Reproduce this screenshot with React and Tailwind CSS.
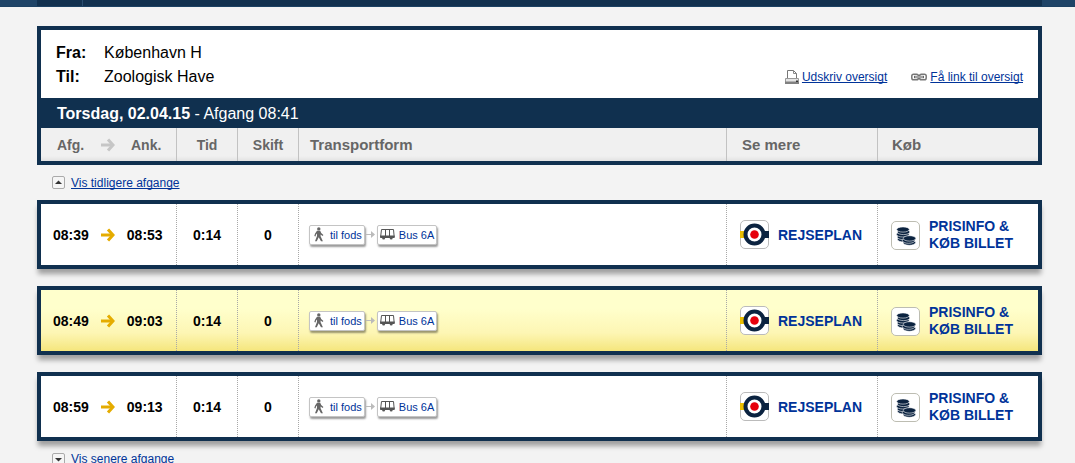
import React from "react";

const departures = [
  { dep: "08:39", arr: "08:53", duration: "0:14", changes: 0, highlighted: false },
  { dep: "08:49", arr: "09:03", duration: "0:14", changes: 0, highlighted: true },
  { dep: "08:59", arr: "09:13", duration: "0:14", changes: 0, highlighted: false },
];

const columns = "grid grid-cols-[136px_61px_61px_minmax(0,1fr)_151px_160px]";
const smallLink =
  "text-xs leading-4 text-[#003399] underline underline-offset-1 [text-decoration-skip-ink:none]";

function Arrow({ className }) {
  return (
    <svg className={className} width="14" height="14" viewBox="0 0 14 14" fill="none" stroke="currentColor" aria-hidden="true">
      <path d="M0 7H12" strokeWidth="3" />
      <path d="M7 1.4L12 7L7 12.6" strokeWidth="3" />
    </svg>
  );
}

function PrinterIcon() {
  return (
    <svg width="14" height="14" viewBox="0 0 14 14" aria-hidden="true">
      <path d="M2.5 9V.5H8.5L11.5 3.5V9" fill="#fff" stroke="#777" />
      <path d="M8.5 .5V3.5H11.5" fill="none" stroke="#888" />
      <path d="M.5 8.5H13.5V13.5H.5Z" fill="#e4e4e4" stroke="#999" />
      <path d="M0 11.5H14V14H0Z" fill="#808080" />
      <path d="M11 10.5H13V12H11Z" fill="#333" />
    </svg>
  );
}

function LinkIcon() {
  return (
    <svg width="16" height="8" viewBox="0 0 16 8" fill="none" aria-hidden="true">
      <rect x=".8" y="1.2" width="6.6" height="5.6" rx="1.8" stroke="#777" strokeWidth="1.5" />
      <rect x="8.6" y="1.2" width="6.6" height="5.6" rx="1.8" stroke="#777" strokeWidth="1.5" />
      <path d="M3 4H13" stroke="#666" strokeWidth="2.4" />
      <path d="M4 4H12" stroke="#eee" strokeWidth=".9" />
    </svg>
  );
}

function WalkIcon() {
  return (
    <svg width="10" height="15" viewBox="0 0 10 15" aria-hidden="true">
      <circle cx="4.8" cy="1.9" r="1.7" fill="#666" />
      <path d="M3 3.8H6.2L7.2 6.1L9.4 7.9L8.6 9L6.6 7.6V9.2L8.9 14.2H7L4.7 10.3L2.8 14.2H1L3 9V6.4L2.1 7.5L1.5 9.4L.3 9L1.1 6.4Z" fill="#666" />
    </svg>
  );
}

function BusIcon() {
  return (
    <svg width="15" height="11" viewBox="0 0 15 11" aria-hidden="true">
      <path d="M1.5 .5H13.5L14.2 8H.6Z" fill="#fff" stroke="#555" />
      <path d="M5.5 .5V7M9.5 .5V7" stroke="#555" />
      <path d="M.2 6.5H14.6V9H.2Z" fill="#555" />
      <circle cx="3.6" cy="9" r="1.5" fill="#555" />
      <circle cx="11.2" cy="9" r="1.5" fill="#555" />
    </svg>
  );
}

function RouteIcon() {
  return (
    <svg className="shrink-0" width="29" height="29" viewBox="0 0 29 29" aria-hidden="true">
      <rect x=".5" y=".5" width="28" height="28" rx="4.5" fill="#fff" stroke="#bbb" />
      <path d="M0 11H6V18H0Z" fill="#eabe00" />
      <path d="M23 11H29V18H23Z" fill="#0b2340" />
      <circle cx="14.5" cy="14.5" r="9" fill="#fff" stroke="#0b2340" strokeWidth="4" />
      <circle cx="14.5" cy="14.5" r="4.3" fill="#e6000c" />
    </svg>
  );
}

function CoinsIcon() {
  return (
    <svg className="shrink-0" width="29" height="29" viewBox="0 0 29 29" aria-hidden="true">
      <rect x=".5" y=".5" width="28" height="28" rx="4.5" fill="#fff" stroke="#bdbdb2" />
      <g fill="#0b2340" stroke="#fff" strokeWidth=".6">
        <ellipse cx="12.8" cy="18.4" rx="6.3" ry="2.6" />
        <ellipse cx="12.4" cy="16" rx="6.3" ry="2.6" />
        <ellipse cx="11.8" cy="13.4" rx="6.3" ry="2.6" />
        <ellipse cx="12.6" cy="11" rx="6.3" ry="2.6" />
        <ellipse cx="12" cy="8.5" rx="6.3" ry="2.6" />
        <ellipse cx="18.3" cy="21.6" rx="6.3" ry="2.7" />
        <ellipse cx="17.6" cy="19.6" rx="6.3" ry="2.7" />
        <ellipse cx="18.5" cy="17.4" rx="6.3" ry="2.7" />
      </g>
    </svg>
  );
}

function ToggleIcon({ down }) {
  return (
    <svg width="13" height="13" viewBox="0 0 13 13" aria-hidden="true">
      <rect x=".5" y=".5" width="12" height="12" rx="1.5" fill="#f5f5f5" stroke="#aaa" />
      <path d={down ? "M3 5H10L6.5 8.5Z" : "M3 8H10L6.5 4.5Z"} fill="#333" />
    </svg>
  );
}

function Chip({ icon, children }) {
  return (
    <a
      href="#detaljer"
      className="flex h-5 items-center gap-1 rounded-xs border border-[#c4c4c4] bg-white px-[2px] text-[11px] leading-4 whitespace-nowrap text-[#003399] shadow-[1px_2px_2px_#00000066]"
    >
      {icon}
      {children}
    </a>
  );
}

function DepartureRow({ item }) {
  const cell = "flex items-center border-r border-dotted border-[#a8a8a8]";
  const background = item.highlighted
    ? "bg-linear-to-b from-[#ffffcc] from-30% via-[#fdf6b4] via-70% to-[#f5e67c]"
    : "bg-white";
  return (
    <tr className={`${columns} ${background} mb-[17px] h-[69px] border-4 border-[#10304f] text-sm font-bold shadow-[0_6px_5px_-1px_#00000059]`}>
      <td className={`${cell} gap-3 pl-3`}>
        <span>{item.dep}</span>
        <Arrow className="text-[#e5ac00]" />
        <span>{item.arr}</span>
      </td>
      <td className={`${cell} justify-center`}>{item.duration}</td>
      <td className={`${cell} justify-center`}>{item.changes}</td>
      <td className={`${cell} pl-[10px]`}>
        <div className="flex items-center font-normal">
          <Chip icon={<span className="flex w-[14px] justify-center"><WalkIcon /></span>}>til fods</Chip>
          <svg width="12" height="8" viewBox="0 0 12 8" aria-hidden="true">
            <path d="M1 3.5H7" stroke="#bbb" />
            <path d="M6 0L10 3.5L6 7Z" fill="#bbb" />
          </svg>
          <Chip icon={<BusIcon />}>Bus 6A</Chip>
        </div>
      </td>
      <td className={`${cell} pl-[13px]`}>
        <a href="#rejseplan" className="flex items-center gap-[9px] text-[#003399]">
          <RouteIcon />
          REJSEPLAN
        </a>
      </td>
      <td className="flex items-center pt-px pl-[13px]">
        <a href="#billet" className="flex items-center gap-[9px] leading-[17px] text-[#003399]">
          <CoinsIcon />
          <span>
            PRISINFO &amp;
            <br />
            KØB BILLET
          </span>
        </a>
      </td>
    </tr>
  );
}

export default function App() {
  const head = "flex items-center border-r border-[#c2c2c2]";
  return (
    <div className="min-h-screen bg-[#f3f3f3] font-['Liberation_Sans',Arial,sans-serif] text-black">
      <header className="h-[7px] border-b border-[#1c4163] bg-[#1f4467] pr-[33px] pl-[37px]">
        <div className="h-full bg-[#12314f]">
          <div className="h-full w-[46px] border-r border-[#2a4d70]" />
        </div>
      </header>
      <main className="pt-[19px] pr-[33px] pb-4 pl-[37px]">
        <section className="border-x-4 border-t-4 border-[#10304f] bg-[#10304f]">
          <div className="flex items-end justify-between bg-white px-[15px] pt-[11px] pb-[9px]">
            <dl className="grid grid-cols-[48px_auto] text-base leading-6">
              <dt className="font-bold">Fra:</dt>
              <dd>København H</dd>
              <dt className="font-bold">Til:</dt>
              <dd>Zoologisk Have</dd>
            </dl>
            <div className="flex gap-6 pb-1">
              <a href="#udskriv" className="flex items-center gap-[3px]">
                <PrinterIcon />
                <span className={smallLink}>Udskriv oversigt</span>
              </a>
              <a href="#link" className="flex items-center gap-[3px]">
                <LinkIcon />
                <span className={smallLink}>Få link til oversigt</span>
              </a>
            </div>
          </div>
          <h2 className="pt-px pl-4 text-base leading-[29px] text-white">
            <strong>Torsdag, 02.04.15</strong> - Afgang 08:41
          </h2>
        </section>
        <table className="block">
          <thead className="block">
            <tr className={`${columns} h-[37px] border-x-4 border-b-4 border-[#10304f] bg-linear-to-b from-[#f0f0f0] from-85% to-[#e2e2e2] text-left text-sm text-[#666]`}>
              <th className={`${head} pl-4`}>
                <span className="w-[44px]">Afg.</span>
                <Arrow className="text-[#c6c6c6]" />
                <span className="pl-4">Ank.</span>
              </th>
              <th className={`${head} justify-center`}>Tid</th>
              <th className={`${head} justify-center`}>Skift</th>
              <th className={`${head} pl-[11px] text-[15px]`}>Transportform</th>
              <th className={`${head} pl-[15px] text-[15px]`}>Se mere</th>
              <th className="flex items-center pl-[14px] text-[15px]">Køb</th>
            </tr>
          </thead>
          <tbody className="block">
            <tr className="block">
              <td colSpan={6} className="flex h-[35px] items-center pl-[15px]">
                <a href="#tidligere" className="flex items-center gap-[6px]">
                  <ToggleIcon />
                  <span className={smallLink}>Vis tidligere afgange</span>
                </a>
              </td>
            </tr>
            {departures.map((item) => (
              <DepartureRow key={item.dep} item={item} />
            ))}
          </tbody>
        </table>
        <a href="#senere" className="-mt-[7px] flex w-fit items-center gap-[6px] pl-[15px]">
          <ToggleIcon down />
          <span className={smallLink}>Vis senere afgange</span>
        </a>
      </main>
    </div>
  );
}
